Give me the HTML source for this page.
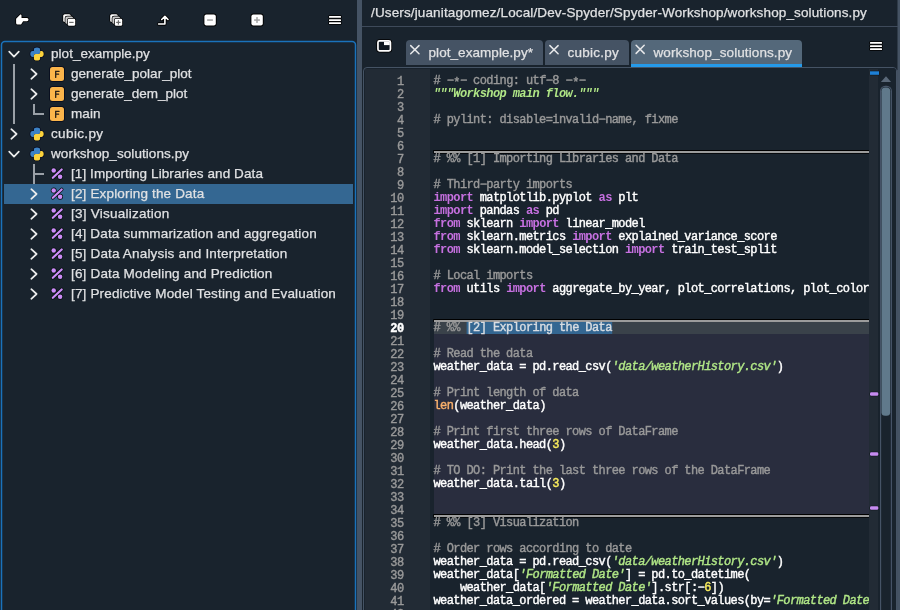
<!DOCTYPE html>
<html>
<head>
<meta charset="utf-8">
<title>Spyder</title>
<style>
html,body{margin:0;padding:0;}
body{width:900px;height:610px;overflow:hidden;background:#19232d;position:relative;font-family:"Liberation Sans",sans-serif;color:#e0e1e3;}
.abs{position:absolute;}
#root{position:absolute;left:0;top:0;width:900px;height:610px;overflow:hidden;will-change:transform;}
svg{display:block;}
#tree{position:absolute;left:2px;top:41px;width:352px;height:580px;border:1px solid #1a72bb;border-radius:5px;}
.tx{-webkit-text-stroke:0.25px;position:absolute;height:20px;line-height:20px;font-size:13.5px;white-space:nowrap;color:#e0e1e3;}
#sel{position:absolute;left:4px;top:184px;width:349px;height:20px;background:#346792;}
#splitter{position:absolute;left:357px;top:0;width:5px;height:610px;background:#455364;}
#path{-webkit-text-stroke:0.25px;position:absolute;left:371px;top:3px;font-size:13.5px;height:20px;line-height:20px;white-space:nowrap;color:#e0e1e3;letter-spacing:0.135px;}
#pathline{position:absolute;left:362px;top:26px;width:536px;height:1px;background:#3e4a5a;}
.tab{position:absolute;top:40px;height:25px;background:#455364;border-radius:4px 4px 0 0;}
.tab.act{background:#54687a;height:24px;border-bottom:3px solid #259ae9;border-radius:4px 4px 0 0;}
#splitter2{position:absolute;left:897px;top:0;width:3px;height:610px;background:linear-gradient(to right,#2f3b48 0,#2f3b48 1px,#455364 1px,#455364 3px);}
#editor{position:absolute;left:363px;top:67px;width:532px;height:560px;border:1px solid #455364;border-radius:4px;overflow:hidden;background:#19232d;}
#gutter{position:absolute;left:1.3px;top:1.3px;width:64.7px;height:100%;background:#222b35;}
#cell{position:absolute;left:66px;width:439px;background:#292d3e;}
#curline{position:absolute;left:66px;width:439px;height:13px;background:#3a424a;}
.sep{position:absolute;left:69px;width:436px;height:1.6px;background:#9a9a9a;border-top:0.7px solid #000;border-bottom:0.7px solid #000;}
.ln,.cd{-webkit-text-stroke:0.4px;position:absolute;font-family:"Liberation Mono",monospace;font-size:12px;letter-spacing:-0.6px;height:13px;line-height:13px;white-space:pre;}
.ln{left:0;width:39.5px;text-align:right;color:#999999;}
.ln.cur{color:#ffffff;font-weight:bold;}
.cd{left:69.5px;color:#ffffff;}
.c{color:#999999;}
.k{color:#c670e0;font-weight:bold;-webkit-text-stroke:0;}
.s{color:#b0e686;font-style:italic;}
.d{font-weight:bold;-webkit-text-stroke:0;}
.n{color:#faed5c;}
.b{color:#fab16c;}
.sel{color:#d8dde2;}
.ast{position:relative;top:2px;}
#flags{position:absolute;left:505px;top:1.3px;width:9.4px;height:100%;background:#222b35;}
.flag{position:absolute;left:506px;width:9px;height:3px;border-radius:1px;box-shadow:0 0 0 0.7px #0a0f14;}
#sbtrack{position:absolute;left:514px;top:0;width:18px;height:100%;background:#19232d;}
#sbhandle{position:absolute;left:516px;top:18px;width:10px;height:330px;border:1px solid #455364;border-top:none;border-bottom:none;}
#sbhandle:before{content:"";position:absolute;left:0.5px;right:0.5px;top:0;bottom:0;background:#60798b;border-radius:4px;}
</style>
</head>
<body>
<div id="root">

<svg class="abs" style="left:0;top:38px" width="360" height="580" viewBox="0 38 360 580"><rect x="1.5" y="41.5" width="354" height="600" rx="3.4" fill="none" stroke="#1a72bb" stroke-width="1.5"/></svg>
<div id="sel"></div>
<svg class="abs" style="left:7px;top:47px" width="14" height="14" viewBox="0 0 14 14"><path d="M2.2 4.6 L7 9.6 L11.8 4.6" fill="none" stroke="#eceded" stroke-width="1.7" stroke-linecap="round" stroke-linejoin="round"/></svg>
<svg class="abs" style="left:29px;top:45.6px" width="16" height="16" viewBox="-1 -1 16 16"><g stroke="#05081c" stroke-width="1.3" stroke-linejoin="round"><path d="M7 0.4 C4.8 0.4 3.9 1.3 3.9 2.6 V4.1 H2.6 C1.2 4.1 0.3 5.2 0.3 7 C0.3 8.8 1.2 9.9 2.5 9.9 H3.8 V8.8 C3.8 7.6 4.7 6.95 5.9 6.95 H8.3 C9.4 6.95 10.1 6.1 10.1 5 V2.6 C10.1 1.3 9.2 0.4 7 0.4 Z" fill="#05081c"/><path d="M7 0.4 C4.8 0.4 3.9 1.3 3.9 2.6 V4.1 H2.6 C1.2 4.1 0.3 5.2 0.3 7 C0.3 8.8 1.2 9.9 2.5 9.9 H3.8 V8.8 C3.8 7.6 4.7 6.95 5.9 6.95 H8.3 C9.4 6.95 10.1 6.1 10.1 5 V2.6 C10.1 1.3 9.2 0.4 7 0.4 Z" fill="#05081c" transform="rotate(180 7 7)"/></g><path d="M7 0.4 C4.8 0.4 3.9 1.3 3.9 2.6 V4.1 H2.6 C1.2 4.1 0.3 5.2 0.3 7 C0.3 8.8 1.2 9.9 2.5 9.9 H3.8 V8.8 C3.8 7.6 4.7 6.95 5.9 6.95 H8.3 C9.4 6.95 10.1 6.1 10.1 5 V2.6 C10.1 1.3 9.2 0.4 7 0.4 Z" fill="#3d82c4"/><path d="M7 0.4 C4.8 0.4 3.9 1.3 3.9 2.6 V4.1 H2.6 C1.2 4.1 0.3 5.2 0.3 7 C0.3 8.8 1.2 9.9 2.5 9.9 H3.8 V8.8 C3.8 7.6 4.7 6.95 5.9 6.95 H8.3 C9.4 6.95 10.1 6.1 10.1 5 V2.6 C10.1 1.3 9.2 0.4 7 0.4 Z" fill="#fdd43c" transform="rotate(180 7 7)"/></svg>
<div class="tx" style="left:51px;top:44px;letter-spacing:0.04px;color:#e0e1e3">plot_example.py</div>
<div class="abs" style="left:13px;top:64px;width:2px;height:60px;background:#9aa0a7"></div>
<svg class="abs" style="left:27px;top:67px" width="14" height="14" viewBox="0 0 14 14"><path d="M4.3 2.2 L9.6 7 L4.3 11.8" fill="none" stroke="#eceded" stroke-width="1.7" stroke-linecap="round" stroke-linejoin="round"/></svg>
<div class="abs" style="left:50px;top:67px;width:14px;height:14px;border-radius:2.5px;background:#fbb54b;box-shadow:0 0 0 0.8px #060a1c;"></div><svg class="abs" style="left:50px;top:67px" width="14" height="14" viewBox="0 0 14 14"><path d="M5.7 10.4V4.3H9.1M5.7 7.2H8.6" fill="none" stroke="#2a2118" stroke-width="1.3" stroke-linecap="round"/></svg>
<div class="tx" style="left:71px;top:64px;letter-spacing:0.025px;color:#e0e1e3">generate_polar_plot</div>
<svg class="abs" style="left:27px;top:87px" width="14" height="14" viewBox="0 0 14 14"><path d="M4.3 2.2 L9.6 7 L4.3 11.8" fill="none" stroke="#eceded" stroke-width="1.7" stroke-linecap="round" stroke-linejoin="round"/></svg>
<div class="abs" style="left:50px;top:87px;width:14px;height:14px;border-radius:2.5px;background:#fbb54b;box-shadow:0 0 0 0.8px #060a1c;"></div><svg class="abs" style="left:50px;top:87px" width="14" height="14" viewBox="0 0 14 14"><path d="M5.7 10.4V4.3H9.1M5.7 7.2H8.6" fill="none" stroke="#2a2118" stroke-width="1.3" stroke-linecap="round"/></svg>
<div class="tx" style="left:71px;top:84px;letter-spacing:-0.01px;color:#e0e1e3">generate_dem_plot</div>
<div class="abs" style="left:33px;top:104px;width:2px;height:11px;background:#9aa0a7"></div>
<div class="abs" style="left:33px;top:113px;width:11px;height:2px;background:#9aa0a7"></div>
<div class="abs" style="left:50px;top:107px;width:14px;height:14px;border-radius:2.5px;background:#fbb54b;box-shadow:0 0 0 0.8px #060a1c;"></div><svg class="abs" style="left:50px;top:107px" width="14" height="14" viewBox="0 0 14 14"><path d="M5.7 10.4V4.3H9.1M5.7 7.2H8.6" fill="none" stroke="#2a2118" stroke-width="1.3" stroke-linecap="round"/></svg>
<div class="tx" style="left:71px;top:104px;letter-spacing:0.12px;color:#e0e1e3">main</div>
<svg class="abs" style="left:7px;top:127px" width="14" height="14" viewBox="0 0 14 14"><path d="M4.3 2.2 L9.6 7 L4.3 11.8" fill="none" stroke="#eceded" stroke-width="1.7" stroke-linecap="round" stroke-linejoin="round"/></svg>
<svg class="abs" style="left:29px;top:125.6px" width="16" height="16" viewBox="-1 -1 16 16"><g stroke="#05081c" stroke-width="1.3" stroke-linejoin="round"><path d="M7 0.4 C4.8 0.4 3.9 1.3 3.9 2.6 V4.1 H2.6 C1.2 4.1 0.3 5.2 0.3 7 C0.3 8.8 1.2 9.9 2.5 9.9 H3.8 V8.8 C3.8 7.6 4.7 6.95 5.9 6.95 H8.3 C9.4 6.95 10.1 6.1 10.1 5 V2.6 C10.1 1.3 9.2 0.4 7 0.4 Z" fill="#05081c"/><path d="M7 0.4 C4.8 0.4 3.9 1.3 3.9 2.6 V4.1 H2.6 C1.2 4.1 0.3 5.2 0.3 7 C0.3 8.8 1.2 9.9 2.5 9.9 H3.8 V8.8 C3.8 7.6 4.7 6.95 5.9 6.95 H8.3 C9.4 6.95 10.1 6.1 10.1 5 V2.6 C10.1 1.3 9.2 0.4 7 0.4 Z" fill="#05081c" transform="rotate(180 7 7)"/></g><path d="M7 0.4 C4.8 0.4 3.9 1.3 3.9 2.6 V4.1 H2.6 C1.2 4.1 0.3 5.2 0.3 7 C0.3 8.8 1.2 9.9 2.5 9.9 H3.8 V8.8 C3.8 7.6 4.7 6.95 5.9 6.95 H8.3 C9.4 6.95 10.1 6.1 10.1 5 V2.6 C10.1 1.3 9.2 0.4 7 0.4 Z" fill="#3d82c4"/><path d="M7 0.4 C4.8 0.4 3.9 1.3 3.9 2.6 V4.1 H2.6 C1.2 4.1 0.3 5.2 0.3 7 C0.3 8.8 1.2 9.9 2.5 9.9 H3.8 V8.8 C3.8 7.6 4.7 6.95 5.9 6.95 H8.3 C9.4 6.95 10.1 6.1 10.1 5 V2.6 C10.1 1.3 9.2 0.4 7 0.4 Z" fill="#fdd43c" transform="rotate(180 7 7)"/></svg>
<div class="tx" style="left:51px;top:124px;letter-spacing:0.37px;color:#e0e1e3">cubic.py</div>
<svg class="abs" style="left:7px;top:147px" width="14" height="14" viewBox="0 0 14 14"><path d="M2.2 4.6 L7 9.6 L11.8 4.6" fill="none" stroke="#eceded" stroke-width="1.7" stroke-linecap="round" stroke-linejoin="round"/></svg>
<svg class="abs" style="left:29px;top:145.6px" width="16" height="16" viewBox="-1 -1 16 16"><g stroke="#05081c" stroke-width="1.3" stroke-linejoin="round"><path d="M7 0.4 C4.8 0.4 3.9 1.3 3.9 2.6 V4.1 H2.6 C1.2 4.1 0.3 5.2 0.3 7 C0.3 8.8 1.2 9.9 2.5 9.9 H3.8 V8.8 C3.8 7.6 4.7 6.95 5.9 6.95 H8.3 C9.4 6.95 10.1 6.1 10.1 5 V2.6 C10.1 1.3 9.2 0.4 7 0.4 Z" fill="#05081c"/><path d="M7 0.4 C4.8 0.4 3.9 1.3 3.9 2.6 V4.1 H2.6 C1.2 4.1 0.3 5.2 0.3 7 C0.3 8.8 1.2 9.9 2.5 9.9 H3.8 V8.8 C3.8 7.6 4.7 6.95 5.9 6.95 H8.3 C9.4 6.95 10.1 6.1 10.1 5 V2.6 C10.1 1.3 9.2 0.4 7 0.4 Z" fill="#05081c" transform="rotate(180 7 7)"/></g><path d="M7 0.4 C4.8 0.4 3.9 1.3 3.9 2.6 V4.1 H2.6 C1.2 4.1 0.3 5.2 0.3 7 C0.3 8.8 1.2 9.9 2.5 9.9 H3.8 V8.8 C3.8 7.6 4.7 6.95 5.9 6.95 H8.3 C9.4 6.95 10.1 6.1 10.1 5 V2.6 C10.1 1.3 9.2 0.4 7 0.4 Z" fill="#3d82c4"/><path d="M7 0.4 C4.8 0.4 3.9 1.3 3.9 2.6 V4.1 H2.6 C1.2 4.1 0.3 5.2 0.3 7 C0.3 8.8 1.2 9.9 2.5 9.9 H3.8 V8.8 C3.8 7.6 4.7 6.95 5.9 6.95 H8.3 C9.4 6.95 10.1 6.1 10.1 5 V2.6 C10.1 1.3 9.2 0.4 7 0.4 Z" fill="#fdd43c" transform="rotate(180 7 7)"/></svg>
<div class="tx" style="left:51px;top:144px;letter-spacing:0.07px;color:#e0e1e3">workshop_solutions.py</div>
<div class="abs" style="left:33px;top:164px;width:2px;height:20px;background:#9aa0a7"></div>
<div class="abs" style="left:33px;top:173px;width:11px;height:2px;background:#9aa0a7"></div>
<svg class="abs" style="left:49px;top:166px" width="16" height="16" viewBox="-1 -1 16 16"><g fill="#06100e" stroke="#06100e" stroke-width="3.6"><circle stroke-width="1.4" cx="3.7" cy="3.5" r="2.25"/><circle stroke-width="1.4" cx="10.1" cy="9.8" r="2.25"/><path d="M2.8 10.8 L11.7 2.5" stroke-linecap="round" fill="none"/></g><g fill="#cc8cf8" stroke="#cc8cf8" stroke-width="2.2"><circle stroke="none" cx="3.7" cy="3.5" r="2.25"/><circle stroke="none" cx="10.1" cy="9.8" r="2.25"/><path d="M2.8 10.8 L11.7 2.5" stroke-linecap="round" fill="none"/></g></svg>
<div class="tx" style="left:71px;top:164px;letter-spacing:0.09px;color:#e0e1e3">[1] Importing Libraries and Data</div>
<svg class="abs" style="left:27px;top:187px" width="14" height="14" viewBox="0 0 14 14"><path d="M4.3 2.2 L9.6 7 L4.3 11.8" fill="none" stroke="#eceded" stroke-width="1.7" stroke-linecap="round" stroke-linejoin="round"/></svg>
<svg class="abs" style="left:49px;top:186px" width="16" height="16" viewBox="-1 -1 16 16"><g fill="#06100e" stroke="#06100e" stroke-width="3.6"><circle stroke-width="1.4" cx="3.7" cy="3.5" r="2.25"/><circle stroke-width="1.4" cx="10.1" cy="9.8" r="2.25"/><path d="M2.8 10.8 L11.7 2.5" stroke-linecap="round" fill="none"/></g><g fill="#cc8cf8" stroke="#cc8cf8" stroke-width="2.2"><circle stroke="none" cx="3.7" cy="3.5" r="2.25"/><circle stroke="none" cx="10.1" cy="9.8" r="2.25"/><path d="M2.8 10.8 L11.7 2.5" stroke-linecap="round" fill="none"/></g></svg>
<div class="tx" style="left:71px;top:184px;letter-spacing:0.16px;color:#e0e1e3">[2] Exploring the Data</div>
<svg class="abs" style="left:27px;top:207px" width="14" height="14" viewBox="0 0 14 14"><path d="M4.3 2.2 L9.6 7 L4.3 11.8" fill="none" stroke="#eceded" stroke-width="1.7" stroke-linecap="round" stroke-linejoin="round"/></svg>
<svg class="abs" style="left:49px;top:206px" width="16" height="16" viewBox="-1 -1 16 16"><g fill="#06100e" stroke="#06100e" stroke-width="3.6"><circle stroke-width="1.4" cx="3.7" cy="3.5" r="2.25"/><circle stroke-width="1.4" cx="10.1" cy="9.8" r="2.25"/><path d="M2.8 10.8 L11.7 2.5" stroke-linecap="round" fill="none"/></g><g fill="#cc8cf8" stroke="#cc8cf8" stroke-width="2.2"><circle stroke="none" cx="3.7" cy="3.5" r="2.25"/><circle stroke="none" cx="10.1" cy="9.8" r="2.25"/><path d="M2.8 10.8 L11.7 2.5" stroke-linecap="round" fill="none"/></g></svg>
<div class="tx" style="left:71px;top:204px;letter-spacing:0.24px;color:#e0e1e3">[3] Visualization</div>
<svg class="abs" style="left:27px;top:227px" width="14" height="14" viewBox="0 0 14 14"><path d="M4.3 2.2 L9.6 7 L4.3 11.8" fill="none" stroke="#eceded" stroke-width="1.7" stroke-linecap="round" stroke-linejoin="round"/></svg>
<svg class="abs" style="left:49px;top:226px" width="16" height="16" viewBox="-1 -1 16 16"><g fill="#06100e" stroke="#06100e" stroke-width="3.6"><circle stroke-width="1.4" cx="3.7" cy="3.5" r="2.25"/><circle stroke-width="1.4" cx="10.1" cy="9.8" r="2.25"/><path d="M2.8 10.8 L11.7 2.5" stroke-linecap="round" fill="none"/></g><g fill="#cc8cf8" stroke="#cc8cf8" stroke-width="2.2"><circle stroke="none" cx="3.7" cy="3.5" r="2.25"/><circle stroke="none" cx="10.1" cy="9.8" r="2.25"/><path d="M2.8 10.8 L11.7 2.5" stroke-linecap="round" fill="none"/></g></svg>
<div class="tx" style="left:71px;top:224px;letter-spacing:0.15px;color:#e0e1e3">[4] Data summarization and aggregation</div>
<svg class="abs" style="left:27px;top:247px" width="14" height="14" viewBox="0 0 14 14"><path d="M4.3 2.2 L9.6 7 L4.3 11.8" fill="none" stroke="#eceded" stroke-width="1.7" stroke-linecap="round" stroke-linejoin="round"/></svg>
<svg class="abs" style="left:49px;top:246px" width="16" height="16" viewBox="-1 -1 16 16"><g fill="#06100e" stroke="#06100e" stroke-width="3.6"><circle stroke-width="1.4" cx="3.7" cy="3.5" r="2.25"/><circle stroke-width="1.4" cx="10.1" cy="9.8" r="2.25"/><path d="M2.8 10.8 L11.7 2.5" stroke-linecap="round" fill="none"/></g><g fill="#cc8cf8" stroke="#cc8cf8" stroke-width="2.2"><circle stroke="none" cx="3.7" cy="3.5" r="2.25"/><circle stroke="none" cx="10.1" cy="9.8" r="2.25"/><path d="M2.8 10.8 L11.7 2.5" stroke-linecap="round" fill="none"/></g></svg>
<div class="tx" style="left:71px;top:244px;letter-spacing:0.175px;color:#e0e1e3">[5] Data Analysis and Interpretation</div>
<svg class="abs" style="left:27px;top:267px" width="14" height="14" viewBox="0 0 14 14"><path d="M4.3 2.2 L9.6 7 L4.3 11.8" fill="none" stroke="#eceded" stroke-width="1.7" stroke-linecap="round" stroke-linejoin="round"/></svg>
<svg class="abs" style="left:49px;top:266px" width="16" height="16" viewBox="-1 -1 16 16"><g fill="#06100e" stroke="#06100e" stroke-width="3.6"><circle stroke-width="1.4" cx="3.7" cy="3.5" r="2.25"/><circle stroke-width="1.4" cx="10.1" cy="9.8" r="2.25"/><path d="M2.8 10.8 L11.7 2.5" stroke-linecap="round" fill="none"/></g><g fill="#cc8cf8" stroke="#cc8cf8" stroke-width="2.2"><circle stroke="none" cx="3.7" cy="3.5" r="2.25"/><circle stroke="none" cx="10.1" cy="9.8" r="2.25"/><path d="M2.8 10.8 L11.7 2.5" stroke-linecap="round" fill="none"/></g></svg>
<div class="tx" style="left:71px;top:264px;letter-spacing:0.175px;color:#e0e1e3">[6] Data Modeling and Prediction</div>
<svg class="abs" style="left:27px;top:287px" width="14" height="14" viewBox="0 0 14 14"><path d="M4.3 2.2 L9.6 7 L4.3 11.8" fill="none" stroke="#eceded" stroke-width="1.7" stroke-linecap="round" stroke-linejoin="round"/></svg>
<svg class="abs" style="left:49px;top:286px" width="16" height="16" viewBox="-1 -1 16 16"><g fill="#06100e" stroke="#06100e" stroke-width="3.6"><circle stroke-width="1.4" cx="3.7" cy="3.5" r="2.25"/><circle stroke-width="1.4" cx="10.1" cy="9.8" r="2.25"/><path d="M2.8 10.8 L11.7 2.5" stroke-linecap="round" fill="none"/></g><g fill="#cc8cf8" stroke="#cc8cf8" stroke-width="2.2"><circle stroke="none" cx="3.7" cy="3.5" r="2.25"/><circle stroke="none" cx="10.1" cy="9.8" r="2.25"/><path d="M2.8 10.8 L11.7 2.5" stroke-linecap="round" fill="none"/></g></svg>
<div class="tx" style="left:71px;top:284px;letter-spacing:0.165px;color:#e0e1e3">[7] Predictive Model Testing and Evaluation</div>
<!-- toolbar icons -->
<svg class="abs" style="left:0;top:0" width="357" height="40" viewBox="0 0 357 40">
<!-- hand -->
<path d="M20.3 14.6 L16.1 18.7 V22.9 Q16.1 24.4 17.7 24.4 H21.1 L23.1 21.2 H27 Q28.5 21.2 28.5 19.55 Q28.5 17.9 27 17.9 H21.5 V15.5 Q21.5 14.1 20.3 14.6 Z" fill="#ffffff" stroke="#000000" stroke-width="1.7" stroke-linejoin="round" paint-order="stroke"/>
<!-- collapse all -->
<g id="stack">
<rect x="63.2" y="14.2" width="7.6" height="7.8" rx="1.6" fill="#ffffff" stroke="#000" stroke-width="1.6" paint-order="stroke"/>
<rect x="65.4" y="16.4" width="7.6" height="7.4" rx="1.6" fill="#c9c9c9" stroke="#000" stroke-width="1.4" paint-order="stroke"/>
<rect x="67.8" y="18.8" width="7.4" height="7" rx="1.4" fill="#ffffff" stroke="#000" stroke-width="1.5" paint-order="stroke"/>
</g>
<rect x="69.2" y="21.8" width="4.4" height="1.2" fill="#6e6e6e"/>
<!-- expand all -->
<use href="#stack" x="47"/>
<rect x="116.2" y="21.8" width="4.4" height="1.2" fill="#6e6e6e"/>
<rect x="117.8" y="20.2" width="1.2" height="4.4" fill="#6e6e6e"/>
<!-- go up arrow -->
<path d="M158.6 24 H164.9 V17 M161.7 19.5 L164.9 16.4 L168 19.5" fill="none" stroke="#000" stroke-width="3.3" stroke-linecap="round" stroke-linejoin="round"/>
<path d="M158.6 24 H164.9 V17 M161.7 19.5 L164.9 16.4 L168 19.5" fill="none" stroke="#fff" stroke-width="1.6" stroke-linecap="round" stroke-linejoin="round"/>
<!-- minus box -->
<rect x="204.4" y="14.4" width="11.4" height="11.2" rx="2" fill="#ffffff" stroke="#000" stroke-width="1.8" paint-order="stroke"/>
<rect x="207.1" y="19.3" width="5.8" height="1.5" fill="#a2a2a2"/>
<!-- plus box -->
<rect x="251.4" y="14.4" width="11.4" height="11.2" rx="2" fill="#ffffff" stroke="#000" stroke-width="1.8" paint-order="stroke"/>
<rect x="254.1" y="19.3" width="5.8" height="1.5" fill="#a2a2a2"/>
<rect x="256.25" y="17.1" width="1.5" height="5.8" fill="#a2a2a2"/>
<!-- hamburger -->
<g fill="#ffffff" stroke="#000" stroke-width="1.5" paint-order="stroke">
<rect x="329" y="16.1" width="12" height="1.7" rx="0.5"/>
<rect x="329" y="19.2" width="12" height="1.7" rx="0.5"/>
<rect x="329" y="22.3" width="12" height="1.7" rx="0.5"/>
</g>
</svg>

<div id="splitter"></div>
<div id="splitter2"></div>
<div class="abs" style="left:897px;top:70px;width:1px;height:540px;background:#435061"></div>
<div id="path">/Users/juanitagomez/Local/Dev-Spyder/Spyder-Workshop/workshop_solutions.py</div>
<div id="pathline"></div>
<!-- browse tabs icon -->
<svg class="abs" style="left:374px;top:37px" width="20" height="18" viewBox="0 0 20 18">
<rect x="3.95" y="3.95" width="12.5" height="9.9" rx="1.6" fill="#0f1720" stroke="#000" stroke-width="3.3"/>
<rect x="3.95" y="3.95" width="12.5" height="9.9" rx="1.6" fill="#0f1720" stroke="#fff" stroke-width="1.7"/>
<rect x="10" y="4.6" width="5.8" height="3.5" fill="#fff"/>
</svg>
<!-- tabs -->
<div class="tab" style="left:406px;width:137px;"></div>
<div class="tab" style="left:545px;width:84px;"></div>
<div class="tab act" style="left:631px;width:171px;"></div>
<svg class="abs" style="left:400px;top:40px" width="260" height="20" viewBox="0 0 260 20">
<g fill="none" stroke="#e6e7e9" stroke-width="1.5" stroke-linecap="round">
<path d="M10.7 5.6 L19 13.7 M19 5.6 L10.7 13.7"/>
<path d="M149.9 5.6 L158.1 13.7 M158.1 5.6 L149.9 13.7"/>
<path d="M236.1 5.3 L244.2 13.4 M244.2 5.3 L236.1 13.4"/>
</g>
</svg>
<div class="tx" style="left:428.5px;top:43px;letter-spacing:0.06px">plot_example.py*</div>
<div class="tx" style="left:567.5px;top:43px;letter-spacing:0.25px">cubic.py</div>
<div class="tx" style="left:653.5px;top:43px;letter-spacing:0.1px">workshop_solutions.py</div>
<!-- hamburger -->
<svg class="abs" style="left:866px;top:38px" width="20" height="16" viewBox="0 0 20 16">
<g fill="#ffffff" stroke="#000" stroke-width="1.5" paint-order="stroke">
<rect x="4" y="4.1" width="12" height="1.7" rx="0.5"/>
<rect x="4" y="7.2" width="12" height="1.7" rx="0.5"/>
<rect x="4" y="10.3" width="12" height="1.7" rx="0.5"/>
</g>
</svg>

<div id="editor">
<div id="gutter"></div>
<svg class="abs" style="left:0;top:0" width="532" height="560" viewBox="0 0 532 560"><rect x="70" y="253" width="435" height="195" fill="#292d3e"/><rect x="70" y="253" width="435" height="13" fill="#3a424a"/><rect x="69.3" y="82" width="435.7" height="3.7" fill="#000"/><rect x="70" y="83" width="435" height="2" fill="#9c9c9c"/><rect x="69.3" y="251" width="435.7" height="3.0" fill="#000"/><rect x="70" y="252" width="435" height="2" fill="#9c9c9c"/><rect x="69.3" y="446" width="435.7" height="3.7" fill="#000"/><rect x="70" y="447" width="435" height="2" fill="#9c9c9c"/><rect x="102.6" y="254" width="145.6" height="12" fill="#346792"/></svg>
<div class="ln" style="top:8px">1</div>
<div class="cd" style="top:7px"><span class="c"># −<span class="ast">*</span>− coding: utf−8 −<span class="ast">*</span>−</span></div>
<div class="ln" style="top:21px">2</div>
<div class="cd" style="top:20px"><span class="s d">"""Workshop main flow."""</span></div>
<div class="ln" style="top:34px">3</div>
<div class="ln" style="top:47px">4</div>
<div class="cd" style="top:46px"><span class="c"># pylint: disable=invalid−name, fixme</span></div>
<div class="ln" style="top:60px">5</div>
<div class="ln" style="top:73px">6</div>
<div class="ln" style="top:86px">7</div>
<div class="cd" style="top:85px"><span class="c"># %% [1] Importing Libraries and Data</span></div>
<div class="ln" style="top:99px">8</div>
<div class="ln" style="top:112px">9</div>
<div class="cd" style="top:111px"><span class="c"># Third−party imports</span></div>
<div class="ln" style="top:125px">10</div>
<div class="cd" style="top:124px"><span class="k">import</span> matplotlib.pyplot <span class="k">as</span> plt</div>
<div class="ln" style="top:138px">11</div>
<div class="cd" style="top:137px"><span class="k">import</span> pandas <span class="k">as</span> pd</div>
<div class="ln" style="top:151px">12</div>
<div class="cd" style="top:150px"><span class="k">from</span> sklearn <span class="k">import</span> linear_model</div>
<div class="ln" style="top:164px">13</div>
<div class="cd" style="top:163px"><span class="k">from</span> sklearn.metrics <span class="k">import</span> explained_variance_score</div>
<div class="ln" style="top:177px">14</div>
<div class="cd" style="top:176px"><span class="k">from</span> sklearn.model_selection <span class="k">import</span> train_test_split</div>
<div class="ln" style="top:190px">15</div>
<div class="ln" style="top:203px">16</div>
<div class="cd" style="top:202px"><span class="c"># Local imports</span></div>
<div class="ln" style="top:216px">17</div>
<div class="cd" style="top:215px"><span class="k">from</span> utils <span class="k">import</span> aggregate_by_year, plot_correlations, plot_color_gradients,</div>
<div class="ln" style="top:229px">18</div>
<div class="ln" style="top:242px">19</div>
<div class="ln cur" style="top:255px">20</div>
<div class="cd" style="top:254px"><span class="c"># %% </span><span class="sel">[2] Exploring the Data</span></div>
<div class="ln" style="top:268px">21</div>
<div class="ln" style="top:281px">22</div>
<div class="cd" style="top:280px"><span class="c"># Read the data</span></div>
<div class="ln" style="top:294px">23</div>
<div class="cd" style="top:293px">weather_data = pd.read_csv(<span class="s">&#x27;data/weatherHistory.csv&#x27;</span>)</div>
<div class="ln" style="top:307px">24</div>
<div class="ln" style="top:320px">25</div>
<div class="cd" style="top:319px"><span class="c"># Print length of data</span></div>
<div class="ln" style="top:333px">26</div>
<div class="cd" style="top:332px"><span class="b">len</span>(weather_data)</div>
<div class="ln" style="top:346px">27</div>
<div class="ln" style="top:359px">28</div>
<div class="cd" style="top:358px"><span class="c"># Print first three rows of DataFrame</span></div>
<div class="ln" style="top:372px">29</div>
<div class="cd" style="top:371px">weather_data.head(<span class="n">3</span>)</div>
<div class="ln" style="top:385px">30</div>
<div class="ln" style="top:398px">31</div>
<div class="cd" style="top:397px"><span class="c"># TO DO: Print the last three rows of the DataFrame</span></div>
<div class="ln" style="top:411px">32</div>
<div class="cd" style="top:410px">weather_data.tail(<span class="n">3</span>)</div>
<div class="ln" style="top:424px">33</div>
<div class="ln" style="top:437px">34</div>
<div class="ln" style="top:450px">35</div>
<div class="cd" style="top:449px"><span class="c"># %% [3] Visualization</span></div>
<div class="ln" style="top:463px">36</div>
<div class="ln" style="top:476px">37</div>
<div class="cd" style="top:475px"><span class="c"># Order rows according to date</span></div>
<div class="ln" style="top:489px">38</div>
<div class="cd" style="top:488px">weather_data = pd.read_csv(<span class="s">&#x27;data/weatherHistory.csv&#x27;</span>)</div>
<div class="ln" style="top:502px">39</div>
<div class="cd" style="top:501px">weather_data[<span class="s">&#x27;Formatted Date&#x27;</span>] = pd.to_datetime(</div>
<div class="ln" style="top:515px">40</div>
<div class="cd" style="top:514px">    weather_data[<span class="s">&#x27;Formatted Date&#x27;</span>].str[:−<span class="n">6</span>])</div>
<div class="ln" style="top:528px">41</div>
<div class="cd" style="top:527px">weather_data_ordered = weather_data.sort_values(by=<span class="s">&#x27;Formatted Date&#x27;</span>)</div>
<div class="ln" style="top:541px">42</div>
<div id="codeclip"></div>
<div id="flags"></div>
<div id="sbtrack"></div>
<svg class="abs" style="left:500px;top:0" width="32" height="560" viewBox="500 0 32 560"><rect x="505.9" y="2.8" width="9.4" height="4.5" fill="#0d1319"/><rect x="506" y="3.3" width="9" height="3.5" fill="#1e80d6"/><rect x="505.6" y="323.8" width="9" height="4.5" rx="1.6" fill="#0d1319"/><rect x="506" y="324.3" width="8.3" height="3.5" rx="1.2" fill="#c68cf0"/><rect x="505.6" y="383.7" width="9" height="4.5" rx="1.6" fill="#0d1319"/><rect x="506" y="384.2" width="8.3" height="3.5" rx="1.2" fill="#c68cf0"/><rect x="505.6" y="437.8" width="9" height="4.5" rx="1.6" fill="#0d1319"/><rect x="506" y="438.3" width="8.3" height="3.5" rx="1.2" fill="#c68cf0"/><path d="M516.9 14 L522 8.3 L527.1 14 Z" fill="#5a6878"/><rect x="516.6" y="18.4" width="10.8" height="600" rx="4.6" fill="none" stroke="#485669" stroke-width="1.1"/><rect x="517.5" y="19.6" width="8.7" height="328.2" rx="3.6" fill="#60798b"/></svg>
</div>
</div>
</body>
</html>
